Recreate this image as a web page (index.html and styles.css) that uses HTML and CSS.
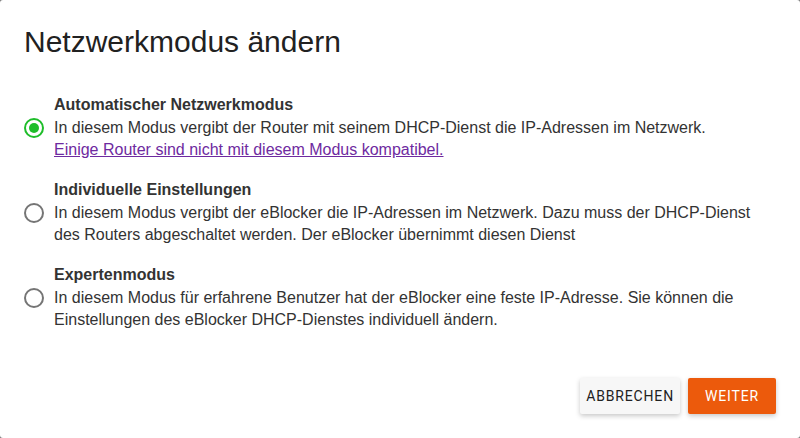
FILE: index.html
```html
<!DOCTYPE html>
<html lang="de">
<head>
<meta charset="utf-8">
<title>Netzwerkmodus ändern</title>
<link rel="stylesheet" href="styles.css">
</head>
<body>
<div class="dialog">
  <h1 class="title">Netzwerkmodus ändern</h1>
  <div class="options">
    <div class="option">
      <div class="opt-title">Automatischer Netzwerkmodus</div>
      <span class="radio checked"></span>
      <div class="opt-desc">In diesem Modus vergibt der Router mit seinem DHCP-Dienst die IP-Adressen im Netzwerk.<br><a class="link" href="#">Einige Router sind nicht mit diesem Modus kompatibel.</a></div>
    </div>
    <div class="option">
      <div class="opt-title">Individuelle Einstellungen</div>
      <span class="radio"></span>
      <div class="opt-desc">In diesem Modus vergibt der eBlocker die IP-Adressen im Netzwerk. Dazu muss der DHCP-Dienst des Routers abgeschaltet werden. Der eBlocker übernimmt diesen Dienst</div>
    </div>
    <div class="option">
      <div class="opt-title">Expertenmodus</div>
      <span class="radio"></span>
      <div class="opt-desc">In diesem Modus für erfahrene Benutzer hat der eBlocker eine feste IP-Adresse. Sie können die Einstellungen des eBlocker DHCP-Dienstes individuell ändern.</div>
    </div>
  </div>
  <div class="actions">
    <button class="btn btn-cancel">Abbrechen</button>
    <button class="btn btn-primary">Weiter</button>
  </div>
</div>
</body>
</html>
```
FILE: styles.css
```css
html, body {
  margin: 0;
  padding: 0;
  height: 100%;
}
body {
  background: #7a7a7a;
  font-family: "Liberation Sans", Arial, sans-serif;
}
.dialog {
  box-sizing: border-box;
  height: 438px;
  background: #fff;
  border-radius: 3px;
  padding: 24px 24px 24px 24px;
  display: flex;
  flex-direction: column;
}
.title {
  margin: 0;
  font-weight: 400;
  font-size: 30px;
  line-height: 36px;
  color: #212121;
}
.options {
  margin-top: 33px;
  display: flex;
  flex-direction: column;
  gap: 17px;
}
.option {
  display: grid;
  grid-template-columns: 30px 1fr;
  color: #333;
  font-size: 16px;
  line-height: 22px;
}
.opt-title {
  grid-column: 2;
  grid-row: 1;
  font-weight: 700;
  line-height: 24px;
}
.radio {
  grid-column: 1;
  grid-row: 2;
  box-sizing: border-box;
  width: 20px;
  height: 20px;
  margin-top: 1px;
  border: 2px solid #757575;
  border-radius: 50%;
  display: flex;
  align-items: center;
  justify-content: center;
}
.radio.checked {
  border-color: #1ebd2a;
}
.radio.checked::after {
  content: "";
  width: 10px;
  height: 10px;
  border-radius: 50%;
  background: #1ebd2a;
}
.opt-desc {
  grid-column: 2;
  grid-row: 2;
}
.link {
  color: #6e2aa0;
  text-decoration: underline;
}
.actions {
  margin-top: auto;
  display: flex;
  justify-content: flex-end;
  gap: 8px;
}
.btn {
  height: 36px;
  min-width: 88px;
  padding: 0 6px;
  border: none;
  border-radius: 2px;
  font-family: Roboto, "Noto Sans", sans-serif;
  font-size: 14px;
  letter-spacing: 0.06em;
  text-transform: uppercase;
  box-shadow: 0 2px 5px rgba(0,0,0,0.22);
  cursor: pointer;
}
.btn-cancel {
  background: #f7f7f7;
  color: #212121;
}
.btn-primary {
  background: #ec5a0c;
  color: #fff;
}
```
